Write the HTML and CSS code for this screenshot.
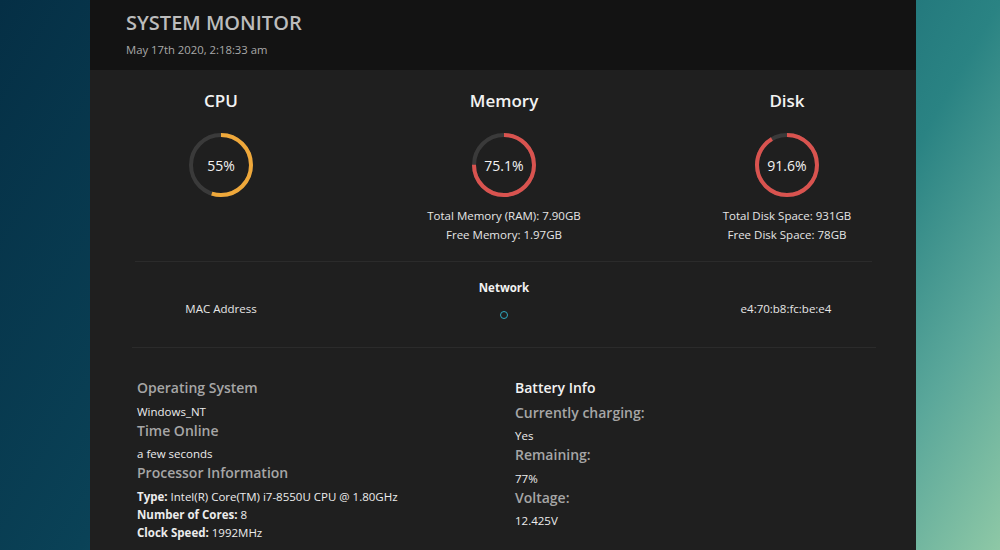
FILE: index.html
```html
<!DOCTYPE html>
<html lang="en">
<head>
<meta charset="utf-8">
<title>System Monitor</title>
<link rel="stylesheet" href="styles.css">
</head>
<body>
<div class="page">
  <header class="top">
    <h1 class="title">SYSTEM MONITOR</h1>
    <div class="date">May 17th 2020, 2:18:33 am</div>
  </header>
  <main class="content">
    <section class="gauges">
      <div class="gauge">
        <h2 class="gauge-title">CPU</h2>
        <div class="ring">
          <svg viewBox="0 0 64 64" width="64" height="64">
            <circle class="track" cx="32" cy="32" r="30"></circle>
            <circle class="bar bar-orange" cx="32" cy="32" r="30" pathLength="100" stroke-dasharray="55 100" transform="rotate(-90 32 32)"></circle>
          </svg>
          <span class="ring-value">55%</span>
        </div>
      </div>
      <div class="gauge">
        <h2 class="gauge-title">Memory</h2>
        <div class="ring">
          <svg viewBox="0 0 64 64" width="64" height="64">
            <circle class="track" cx="32" cy="32" r="30"></circle>
            <circle class="bar bar-red" cx="32" cy="32" r="30" pathLength="100" stroke-dasharray="75.1 100" transform="rotate(-90 32 32)"></circle>
          </svg>
          <span class="ring-value">75.1%</span>
        </div>
        <p class="gauge-line">Total Memory (RAM): 7.90GB</p>
        <p class="gauge-line">Free Memory: 1.97GB</p>
      </div>
      <div class="gauge">
        <h2 class="gauge-title">Disk</h2>
        <div class="ring">
          <svg viewBox="0 0 64 64" width="64" height="64">
            <circle class="track" cx="32" cy="32" r="30"></circle>
            <circle class="bar bar-red" cx="32" cy="32" r="30" pathLength="100" stroke-dasharray="91.6 100" transform="rotate(-90 32 32)"></circle>
          </svg>
          <span class="ring-value">91.6%</span>
        </div>
        <p class="gauge-line">Total Disk Space: 931GB</p>
        <p class="gauge-line">Free Disk Space: 78GB</p>
      </div>
    </section>
    <hr class="rule rule-a">
    <section class="network">
      <div class="net-side">MAC Address</div>
      <div class="net-mid">
        <h3 class="net-title">Network</h3>
        <span class="net-dot"></span>
      </div>
      <div class="net-side net-right">e4:70:b8:fc:be:e4</div>
    </section>
    <hr class="rule rule-b">
    <section class="info">
      <div class="info-col">
        <h4 class="info-head">Operating System</h4>
        <p class="info-val">Windows_NT</p>
        <h4 class="info-head">Time Online</h4>
        <p class="info-val">a few seconds</p>
        <h4 class="info-head">Processor Information</h4>
        <p class="info-line"><b>Type:</b> Intel(R) Core(TM) i7-8550U CPU @ 1.80GHz</p>
        <p class="info-line"><b>Number of Cores:</b> 8</p>
        <p class="info-line"><b>Clock Speed:</b> 1992MHz</p>
      </div>
      <div class="info-col">
        <h4 class="info-head info-head-white">Battery Info</h4>
        <h4 class="info-head">Currently charging:</h4>
        <p class="info-val">Yes</p>
        <h4 class="info-head">Remaining:</h4>
        <p class="info-val">77%</p>
        <h4 class="info-head">Voltage:</h4>
        <p class="info-val">12.425V</p>
      </div>
    </section>
  </main>
</div>
</body>
</html>
```
FILE: styles.css
```css
* { box-sizing: border-box; }
html, body { height: 100%; }
body {
  margin: 0;
  overflow: hidden;
  font-family: "Open Sans", "Noto Sans", sans-serif;
  color: #e6e6e6;
  background: linear-gradient(120deg, #052f45 0%, #0a4257 30%, #14606e 52%, #2a8383 76%, #5aa79a 88%, #8ec8a6 100%);
}
.page {
  width: 826px;
  margin-left: 90px;
  height: 100%;
  background: #1f1f1f;
}
.top {
  height: 70px;
  background: #131313;
  padding: 10px 0 0 36px;
}
.title {
  margin: 0;
  font-size: 20px;
  line-height: 26px;
  font-weight: 600;
  color: #bcbcbc;
}
.date {
  font-size: 11.3px;
  line-height: 16px;
  margin-top: 6px;
  color: #a9a9a9;
}
.content {
  padding: 19px 40px 0 42px;
}
.gauges {
  display: grid;
  grid-template-columns: 200px 200px 200px;
  column-gap: 83px;
  margin-left: -11px;
}
.gauge {
  display: flex;
  flex-direction: column;
  align-items: center;
}
.gauge-title {
  margin: 0;
  font-size: 17px;
  line-height: 24px;
  font-weight: 600;
  color: #f2f2f2;
}
.ring {
  position: relative;
  width: 64px;
  height: 64px;
  margin-top: 20px;
  margin-bottom: 9px;
}
.ring svg { display: block; }
.track {
  fill: none;
  stroke: #3a3a3a;
  stroke-width: 4;
}
.bar {
  fill: none;
  stroke-width: 4;
}
.bar-orange { stroke: #efa83a; }
.bar-red { stroke: #d9534f; }
.ring-value {
  position: absolute;
  inset: 0;
  display: flex;
  align-items: center;
  justify-content: center;
  font-size: 14px;
  color: #f2f2f2;
}
.gauge-line {
  margin: 0;
  font-size: 11.5px;
  line-height: 19px;
  color: #e6e6e6;
}
.rule {
  border: 0;
  height: 1px;
  background: #2b2b2b;
  margin: 0;
}
.rule-a { margin: 17px 4px 0 3px; }
.rule-b { margin: 28px 0 0 0; }
.network {
  display: grid;
  grid-template-columns: 1fr 1fr 1fr;
  padding-top: 18px;
}
.net-side {
  text-align: center;
  font-size: 11.5px;
  line-height: 18px;
  padding-top: 20px;
  color: #e6e6e6;
  margin-left: -70px;
}
.net-right { margin-left: 0; margin-right: -68px; }
.net-mid {
  display: flex;
  flex-direction: column;
  align-items: center;
}
.net-title {
  margin: 0;
  font-size: 11.5px;
  line-height: 16px;
  font-weight: 700;
  color: #f2f2f2;
}
.net-dot {
  width: 8px;
  height: 8px;
  margin-top: 15px;
  border: 1.5px solid #2fa9c0;
  border-radius: 50%;
}
.info {
  display: grid;
  grid-template-columns: 378px 1fr;
  padding: 30px 0 0 5px;
}
.info-head {
  margin: 0 0 4.5px;
  font-size: 14px;
  line-height: 20px;
  font-weight: 600;
  color: #a6a6a6;
}
.info-head-white { color: #f2f2f2; }
.info-val, .info-line {
  margin: 0;
  font-size: 11.5px;
  line-height: 18px;
  color: #ececec;
}
.info-line b { font-weight: 700; }
```
